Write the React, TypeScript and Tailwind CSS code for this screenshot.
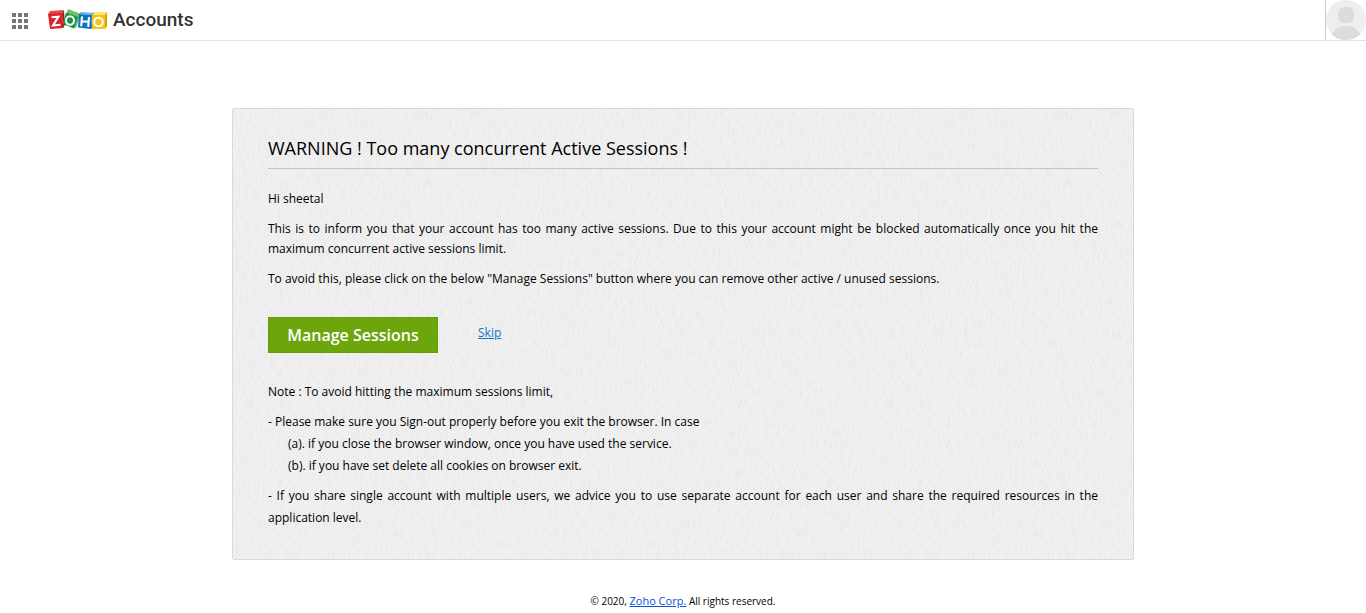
import React from "react";

function ZohoLogo() {
  return (
    <svg width="60" height="22" viewBox="0 0 60 22" role="img" aria-label="Zoho">
      <path d="M0 5 L2 2 L16 1 L14 5Z" fill="#e8474a" />
      <path d="M14 5 L16 1 L17 16 L15 19Z" fill="#a5151b" />
      <path d="M0 5 L14 4 L15.500 19 L2 20Z" fill="#d8232a" />
      <path d="M20 0 L33 5 L28 19 L15 14Z" fill="#75bd6b" />
      <path d="M18 3.500 L30 8 L26 19.500 L15 15Z" fill="#109447" />
      <path d="M31 5 L33 3 L46 4 L44 6Z" fill="#62b5e5" />
      <path d="M44 6 L46 3 L45 18 L43 20Z" fill="#04569d" />
      <path d="M31 5 L44 6 L43 20 L30 18.500Z" fill="#0877bd" />
      <path d="M44 6 L47 3 L59 3 L57 6Z" fill="#ffe36d" />
      <path d="M57 6 L59 3 L59 17 L57 20Z" fill="#dca000" />
      <path d="M44 6 H57 V20 H44Z" fill="#f9c31b" />
      <g fill="none" stroke="#fff" strokeWidth="2.100">
        <path d="M3.500 8.200 L10.500 7.600 L5 16.500 L12.500 15.800" />
        <ellipse cx="22" cy="11.500" rx="4" ry="4.200" />
        <path d="M34 7.500 L33.200 17.300 M41 8 L40.200 17.800 M34 12.300 L40.500 12.800" />
        <circle cx="50.500" cy="13" r="4.300" />
      </g>
    </svg>
  );
}

function AppsIcon() {
  return (
    <svg width="16" height="16" viewBox="0 0 16 16" fill="#777" aria-hidden="true">
      {[0, 6, 12].map((y) =>
        [0, 6, 12].map((x) => <rect key={`${x}-${y}`} x={x} y={y} width="4" height="4" />)
      )}
    </svg>
  );
}

function Avatar() {
  return (
    <svg width="40" height="40" viewBox="0 0 40 40" aria-hidden="true">
      <defs>
        <clipPath id="avatar-circle"><circle cx="20" cy="20" r="20" /></clipPath>
      </defs>
      <circle cx="20" cy="20" r="20" fill="#eee" />
      <g fill="#dcdcdc" clipPath="url(#avatar-circle)">
        <rect x="12" y="7" width="16" height="16" rx="6" />
        <path d="M5 36 C8 29 13 26 20 26 S32 29 35 36 V40 H5Z" />
      </g>
    </svg>
  );
}

function Texture() {
  return (
    <svg className="absolute inset-0 h-full w-full" aria-hidden="true">
      <defs>
        <filter id="weave-vertical" x="0" y="0" width="100%" height="100%">
          <feTurbulence type="fractalNoise" baseFrequency="0.4 0.1" numOctaves="3" seed="4" />
          <feColorMatrix values="0 0 0 0 0.5  0 0 0 0 0.5  0 0 0 0 0.5  0.28 0 0 0 -0.115" />
        </filter>
        <pattern id="weave" width="4" height="4" patternUnits="userSpaceOnUse">
          <path d="M0 0h4v4H0z" fill="#f0f0f0" />
          <path d="M3 0h1v1H3zM2 1h1v1H2zM1 2h1v1H1zM0 3h1v1H0z" fill="#ebebeb" />
          <path d="M1 0h1v1H1zM0 1h1v1H0zM3 2h1v1H3zM2 3h1v1H2z" fill="#f4f4f4" />
        </pattern>
      </defs>
      <rect width="100%" height="100%" fill="url(#weave)" />
      <rect width="100%" height="100%" filter="url(#weave-vertical)" />
    </svg>
  );
}

export default function App() {
  return (
    <div className="bg-white font-['Open_Sans',sans-serif] text-[12px] text-black">
      <header className="flex h-[41px] items-stretch justify-between border-b border-[#e3e3e3]">
        <div className="flex items-center pl-3">
          <button type="button" aria-label="Apps" className="mr-5 pt-[2px]"><AppsIcon /></button>
          <a href="#" className="flex items-center gap-[5px]">
            <ZohoLogo />
            <span className="font-[Roboto,sans-serif] text-[19px] font-medium text-[#333]">Accounts</span>
          </a>
        </div>
        <button type="button" aria-label="Profile" className="border-l border-[#ccc]"><Avatar /></button>
      </header>

      <main className="relative mx-auto mt-[67px] max-w-[902px] overflow-hidden rounded-xs border border-[#d9d9d9] bg-[#f0f0f0] px-[35px] pt-6 pb-[30px]">
        <Texture />
        <div className="relative">
          <h1 className="border-b border-[#c4c4c4] pt-1 pb-2 text-[18px] leading-[23px]">
            WARNING ! Too many concurrent Active Sessions !
          </h1>
          <div className="mt-5 space-y-[10px] text-justify leading-5">
            <p>Hi sheetal</p>
            <p>
              This is to inform you that your account has too many active sessions. Due to this your account might be
              blocked automatically once you hit the maximum concurrent active sessions limit.
            </p>
            <p>
              To avoid this, please click on the below "Manage Sessions" button where you can remove other active /
              unused sessions.
            </p>
          </div>
          <div className="mt-7 flex gap-10">
            <button
              type="button"
              className="h-9 w-[170px] border border-[#629b0b] bg-[#6ca60c] text-[16px] font-semibold text-white"
            >
              Manage Sessions
            </button>
            <a href="#" className="mt-[5px] h-[22px] leading-[22px] text-[#0878cc] underline">Skip</a>
          </div>
          <div className="mt-7 space-y-2 text-justify leading-[22px]">
            <p>Note : To avoid hitting the maximum sessions limit,</p>
            <div>
              <p>- Please make sure you Sign-out properly before you exit the browser. In case</p>
              <p className="pl-5">(a). if you close the browser window, once you have used the service.</p>
              <p className="pl-5">(b). if you have set delete all cookies on browser exit.</p>
            </div>
            <p>
              - If you share single account with multiple users, we advice you to use separate account for each user and
              share the required resources in the application level.
            </p>
          </div>
        </div>
      </main>

      <footer className="mt-[31px] text-center text-[10px] leading-5">
        © 2020, <a href="#" className="text-[11px] text-[#0a50d8] underline">Zoho Corp.</a> All rights reserved.
      </footer>
    </div>
  );
}
